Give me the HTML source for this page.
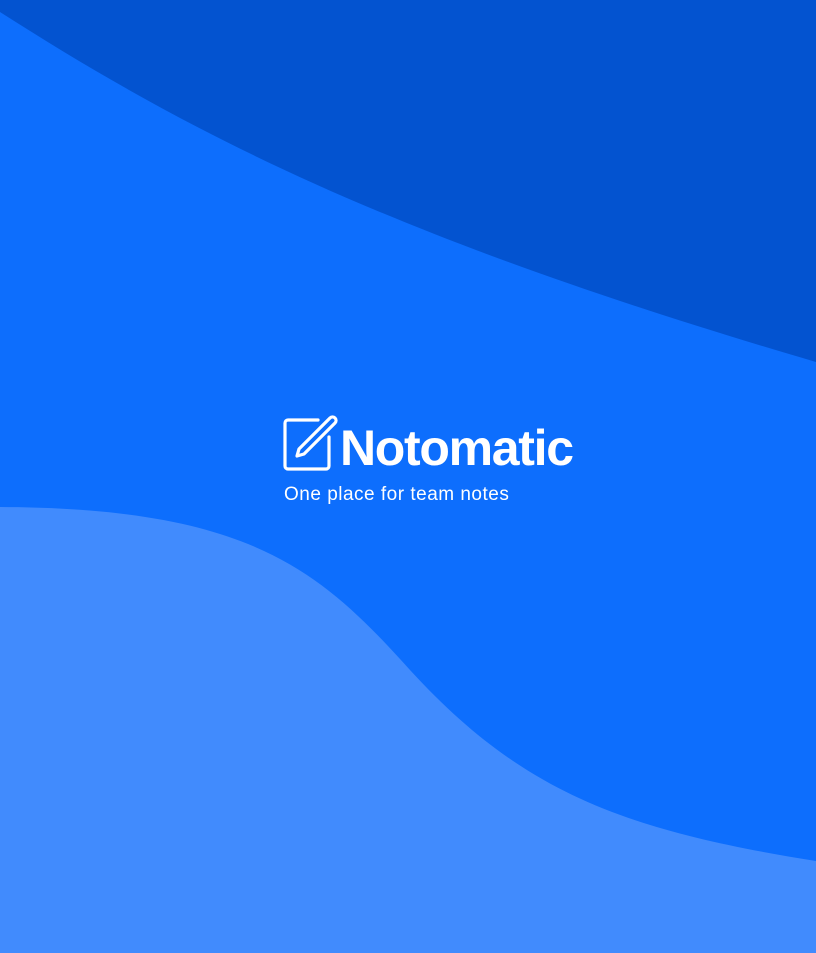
<!DOCTYPE html>
<html><head><style>
html,body{margin:0;padding:0;width:816px;height:953px;overflow:hidden;background:#0d6efd;font-family:"Liberation Sans",sans-serif}
svg.bg{position:absolute;left:0;top:0}
.t{position:absolute;left:340px;top:416px;color:#fff;font-weight:bold;font-size:50px;letter-spacing:-1.3px;line-height:64px}
.s{position:absolute;left:284px;top:483px;color:#fff;font-size:19px;letter-spacing:0.5px;line-height:24px}
</style></head><body>
<svg class="bg" width="816" height="953" viewBox="0 0 816 953">
<path d="M0 12 C 200 140, 400 240, 816 362 L816 0 L0 0 Z" fill="#0353d0"/>
<path d="M0 507 C 250 508, 320 570, 410 670 C 520 790, 620 830, 816 861 L816 953 L0 953 Z" fill="#418bfd"/>
<g fill="none" stroke="#fff" stroke-width="3.2" stroke-linejoin="round" stroke-linecap="round">
<path d="M318 420 H288 a3 3 0 0 0 -3 3 V466 a3 3 0 0 0 3 3 H326 a3 3 0 0 0 3 -3 V437"/>
<path d="M330 418 a3.5 3.5 0 0 1 5 5 L304 454 L297 456 L299 449 Z"/>
</g>
</svg>
<div class="t">Notomatic</div>
<div class="s">One place for team notes</div>
</body></html>
